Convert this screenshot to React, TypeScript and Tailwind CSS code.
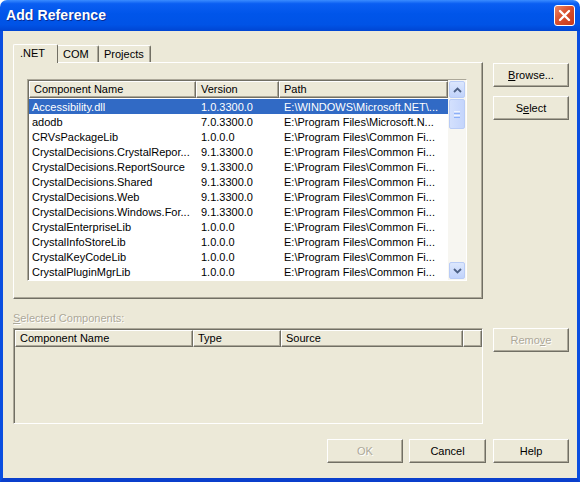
import type { ReactNode } from "react";

type Row = { name: string; version: string; path: string };

const rows: Row[] = [
  { name: "Accessibility.dll", version: "1.0.3300.0", path: "E:\\WINDOWS\\Microsoft.NET\\..." },
  { name: "adodb", version: "7.0.3300.0", path: "E:\\Program Files\\Microsoft.N..." },
  { name: "CRVsPackageLib", version: "1.0.0.0", path: "E:\\Program Files\\Common Fi..." },
  { name: "CrystalDecisions.CrystalRepor...", version: "9.1.3300.0", path: "E:\\Program Files\\Common Fi..." },
  { name: "CrystalDecisions.ReportSource", version: "9.1.3300.0", path: "E:\\Program Files\\Common Fi..." },
  { name: "CrystalDecisions.Shared", version: "9.1.3300.0", path: "E:\\Program Files\\Common Fi..." },
  { name: "CrystalDecisions.Web", version: "9.1.3300.0", path: "E:\\Program Files\\Common Fi..." },
  { name: "CrystalDecisions.Windows.For...", version: "9.1.3300.0", path: "E:\\Program Files\\Common Fi..." },
  { name: "CrystalEnterpriseLib", version: "1.0.0.0", path: "E:\\Program Files\\Common Fi..." },
  { name: "CrystalInfoStoreLib", version: "1.0.0.0", path: "E:\\Program Files\\Common Fi..." },
  { name: "CrystalKeyCodeLib", version: "1.0.0.0", path: "E:\\Program Files\\Common Fi..." },
  { name: "CrystalPluginMgrLib", version: "1.0.0.0", path: "E:\\Program Files\\Common Fi..." },
];

function Btn({ children, w = "w-[76px]", disabled = false }: { children: ReactNode; w?: string; disabled?: boolean }) {
  return (
    <div
      className={`${w} h-[24px] shrink-0 flex items-center justify-center bg-[#ECE9D8] border border-t-white border-l-white border-r-[#716F64] border-b-[#716F64] shadow-[inset_-1px_-1px_0_#ACA899] ${
        disabled ? "text-[#ACA899] [text-shadow:1px_1px_0_#fff]" : "text-black"
      }`}
    >
      {children}
    </div>
  );
}

function HeaderCell({ children, w, grow = false }: { children?: ReactNode; w?: string; grow?: boolean }) {
  return (
    <div
      className={`${grow ? "flex-1" : w} h-[17px] shrink-0 flex items-center pl-[4px] bg-[#ECE9D8] border-r border-b border-r-[#716F64] border-b-[#716F64] border-t border-l border-t-white border-l-white shadow-[inset_-1px_-1px_0_#ACA899] whitespace-nowrap overflow-hidden`}
    >
      {children}
    </div>
  );
}

function Chevron({ up }: { up?: boolean }) {
  return (
    <svg width="9" height="6" viewBox="0 0 9 6">
      <path d={up ? "M1 5 L4.5 1.5 L8 5" : "M1 1 L4.5 4.5 L8 1"} fill="none" stroke="#4D6185" strokeWidth="1.8" />
    </svg>
  );
}

function ScrollBtn({ up }: { up?: boolean }) {
  return (
    <div className="h-[17px] mx-[1px] rounded-[2px] border border-[#B9CCF6] bg-[linear-gradient(to_bottom,#DCE7FD,#C1D3FB)] flex items-center justify-center">
      <Chevron up={up} />
    </div>
  );
}

function Scrollbar() {
  return (
    <div className="w-[18px] shrink-0 flex flex-col bg-[#F7F6F1] py-[1px]">
      <ScrollBtn up />
      <div className="h-[30px] mx-[1px] mt-[1px] rounded-[2px] border border-[#B9CCF6] bg-[linear-gradient(to_right,#D3E0FD,#C4D5FC)] flex flex-col items-center justify-center gap-[1px]">
        <div className="w-[6px] h-px bg-[#EEF4FE]" />
        <div className="w-[6px] h-px bg-[#8CB0F8]" />
        <div className="w-[6px] h-px bg-[#EEF4FE]" />
        <div className="w-[6px] h-px bg-[#8CB0F8]" />
      </div>
      <div className="flex-1" />
      <ScrollBtn />
    </div>
  );
}

export default function App() {
  return (
    <div className="w-[580px] h-[482px] flex flex-col bg-white font-['Liberation_Sans',Arial,sans-serif] text-[11px] text-black">
      {/* title bar */}
      <div className="h-[31px] shrink-0 rounded-t-[7px] flex items-center justify-between pl-[6px] pr-[5px] bg-[linear-gradient(to_bottom,#3A8CFF_0%,#0A5EF2_12%,#0055EA_45%,#0053E6_80%,#0045D2_100%)]">
        <span className="text-white font-bold text-[14px] tracking-[0.1px] [text-shadow:1px_1px_0_#0A2A90]">Add Reference</span>
        <div className="w-[21px] h-[21px] rounded-[3px] border border-white bg-[linear-gradient(135deg,#EC8866,#D9502E_45%,#C5381A)] flex items-center justify-center">
          <svg width="13" height="13" viewBox="0 0 13 13">
            <path d="M2 2 L11 11 M11 2 L2 11" stroke="white" strokeWidth="2.4" strokeLinecap="round" />
          </svg>
        </div>
      </div>

      {/* body */}
      <div className="flex-1 flex flex-col bg-[#ECE9D8] border-x-[3px] border-b-[4px] border-x-[#0A4EE0] border-b-[#0A3FCC] pl-[10px] pt-[12px]">
        <div className="flex">
          <div className="w-[470px] flex flex-col">
            {/* tabs */}
            <div className="h-[19px] flex items-end">
              <div className="w-[45px] h-[19px] -mb-px relative z-10 bg-[#ECE9D8] border-t border-l border-r border-t-white border-l-white border-r-[#716F64] rounded-t-[2px] flex items-center pl-[6px] pb-[1px]">
                .NET
              </div>
              <div className="w-[41px] h-[17px] bg-[#ECE9D8] border-t border-r border-t-white border-r-[#716F64] shadow-[inset_-1px_0_0_#ACA899] rounded-tr-[2px] flex items-center pl-[5px]">
                COM
              </div>
              <div className="w-[52px] h-[17px] bg-[#ECE9D8] border-t border-r border-t-white border-r-[#716F64] shadow-[inset_-1px_0_0_#ACA899] rounded-tr-[2px] flex items-center pl-[5px]">
                Projects
              </div>
            </div>
            {/* tab panel */}
            <div className="h-[237px] border border-t-white border-l-white border-r-[#716F64] border-b-[#716F64] shadow-[inset_-1px_-1px_0_#ACA899] pl-[13px] pt-[16px]">
              <div className="w-[440px] h-[202px] flex bg-white border border-t-[#ACA899] border-l-[#ACA899] border-r-white border-b-white shadow-[inset_1px_1px_0_#716F64]">
                <div className="flex-1 flex flex-col pl-[1px] pt-[1px] overflow-hidden">
                  <div className="flex">
                    <HeaderCell w="w-[167px]">Component Name</HeaderCell>
                    <HeaderCell w="w-[83px]">Version</HeaderCell>
                    <HeaderCell grow>Path</HeaderCell>
                  </div>
                  <div className="flex flex-col mt-[1px]">
                    {rows.map((r, i) => (
                      <div
                        key={r.name}
                        className={`h-[15px] flex items-center pt-[1px] whitespace-nowrap ${
                          i === 0 ? "bg-[#316AC5] text-white" : ""
                        }`}
                      >
                        <span className="w-[167px] pl-[3px] overflow-hidden">{r.name}</span>
                        <span className="w-[83px] pl-[5px] overflow-hidden">{r.version}</span>
                        <span className="flex-1 pl-[5px] overflow-hidden">{r.path}</span>
                      </div>
                    ))}
                  </div>
                </div>
                <Scrollbar />
              </div>
            </div>
          </div>
          <div className="ml-[10px] pt-[20px] flex flex-col gap-[9px]">
            <Btn>
              <span><u>B</u>rowse...</span>
            </Btn>
            <Btn>
              <span>S<u>e</u>lect</span>
            </Btn>
          </div>
        </div>

        {/* selected components */}
        <div className="flex">
          <div className="w-[470px] flex flex-col">
            <div className="mt-[12px] h-[14px] leading-[14px] mb-[3px] text-[#ACA899] [text-shadow:1px_1px_0_#fff]">
              <u>S</u>elected Components:
            </div>
            <div className="h-[96px] flex flex-col border border-t-[#ACA899] border-l-[#ACA899] border-r-white border-b-white shadow-[inset_1px_1px_0_#716F64] pl-[1px] pt-[1px]">
              <div className="flex">
                <HeaderCell w="w-[178px]">Component Name</HeaderCell>
                <HeaderCell w="w-[88px]">Type</HeaderCell>
                <HeaderCell w="w-[182px]">Source</HeaderCell>
                <HeaderCell grow />
              </div>
            </div>
          </div>
          <div className="ml-[10px] pt-[29px]">
            <Btn disabled>
              <span>Remo<u>v</u>e</span>
            </Btn>
          </div>
        </div>

        {/* bottom buttons */}
        <div className="mt-[15px] flex justify-end pr-[8px]">
          <Btn disabled>OK</Btn>
          <div className="ml-[6px]">
            <Btn w="w-[77px]">Cancel</Btn>
          </div>
          <div className="ml-[7px]">
            <Btn>Help</Btn>
          </div>
        </div>
      </div>
    </div>
  );
}
